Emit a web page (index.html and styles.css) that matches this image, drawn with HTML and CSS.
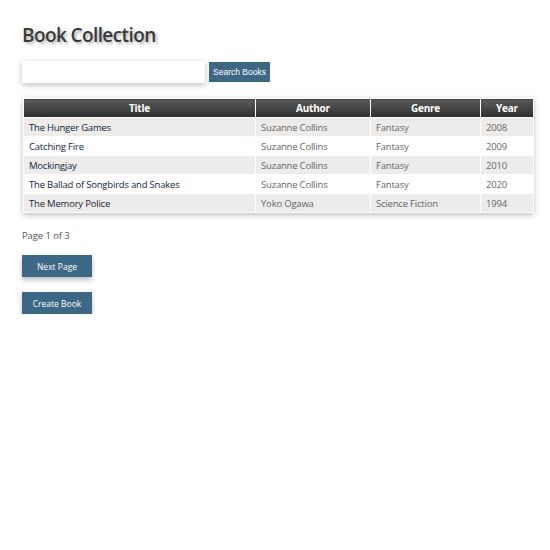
FILE: index.html
```html
<!DOCTYPE html>
<html>
<head>
<meta charset="utf-8">
<link rel="stylesheet" href="styles.css">
</head>
<body>
<div class="page">
  <h1 class="heading">Book Collection</h1>
  <form class="search">
    <input class="search-input" type="text">
    <button class="search-btn" type="button">Search Books</button>
  </form>
  <table class="books">
    <thead>
      <tr><th class="c-title">Title</th><th class="c-author">Author</th><th class="c-genre">Genre</th><th class="c-year">Year</th></tr>
    </thead>
    <tbody>
      <tr><td class="t">The Hunger Games</td><td>Suzanne Collins</td><td>Fantasy</td><td>2008</td></tr>
      <tr><td class="t">Catching Fire</td><td>Suzanne Collins</td><td>Fantasy</td><td>2009</td></tr>
      <tr><td class="t">Mockingjay</td><td>Suzanne Collins</td><td>Fantasy</td><td>2010</td></tr>
      <tr><td class="t">The Ballad of Songbirds and Snakes</td><td>Suzanne Collins</td><td>Fantasy</td><td>2020</td></tr>
      <tr><td class="t">The Memory Police</td><td>Yoko Ogawa</td><td>Science Fiction</td><td>1994</td></tr>
    </tbody>
  </table>
  <p class="pager">Page 1 of 3</p>
  <button class="btn" type="button">Next Page</button>
  <button class="btn" type="button">Create Book</button>
</div>
</body>
</html>
```

FILE: styles.css
```css
* { box-sizing: border-box; }
body {
  margin: 0;
  background: #fff;
  font-family: "Open Sans", "DejaVu Sans", sans-serif;
  color: #555;
}
.page {
  padding: 22px 16px 0 22px;
  display: flex;
  flex-direction: column;
  align-items: flex-start;
}
.heading {
  margin: 0;
  font-size: 19px;
  font-weight: 600;
  letter-spacing: -0.6px;
  color: #3a3a3a;
  line-height: 26px;
  text-shadow: 2px 2px 3px rgba(0,0,0,0.3);
}
.search {
  display: flex;
  gap: 4px;
  margin-top: 13px;
  align-items: center;
}
.search-input {
  width: 183px;
  height: 22px;
  border: none;
  background: #fff;
  box-shadow: 0 2px 6px rgba(0,0,0,0.25);
  outline: none;
}
.search-btn {
  height: 20px;
  width: 61px;
  padding: 0;
  border: none;
  background: #3d6885;
  color: #fff;
  font-family: "Liberation Sans", Arial, sans-serif;
  font-size: 8.5px;
}
.books {
  margin-top: 15px;
  margin-left: 1px;
  width: 511px;
  border-collapse: collapse;
  box-shadow: 0 2px 6px rgba(0,0,0,0.25);
  font-size: 9.5px;
  letter-spacing: -0.2px;
}
.books th {
  height: 19px;
  padding: 0 5px;
  background: linear-gradient(#5b5b5b, #2f2f2f);
  color: #fff;
  font-size: 10px;
  font-weight: 700;
  border: 1px solid #fff;
  text-align: center;
}
.c-title { width: 232px; }
.c-author { width: 115px; }
.c-genre { width: 110px; }
.books td {
  height: 19px;
  padding: 0 5px;
  border: 1px solid #fff;
  color: #666;
}
.books tbody tr:nth-child(odd) td { background: #edecea; }
.books tbody tr:nth-child(even) td { background: #fff; }
.books td.t { color: #13263b; }
.pager {
  margin: 16px 0 0;
  font-size: 9.5px;
  letter-spacing: -0.1px;
  color: #555;
}
.btn {
  margin-top: 13px;
  width: 70px;
  height: 22px;
  border: none;
  background: #3d6885;
  color: #fff;
  font-family: "Open Sans", sans-serif;
  font-size: 8.5px;
  box-shadow: 0 3px 5px rgba(0,0,0,0.25);
}
.btn + .btn { margin-top: 15px; }
```
